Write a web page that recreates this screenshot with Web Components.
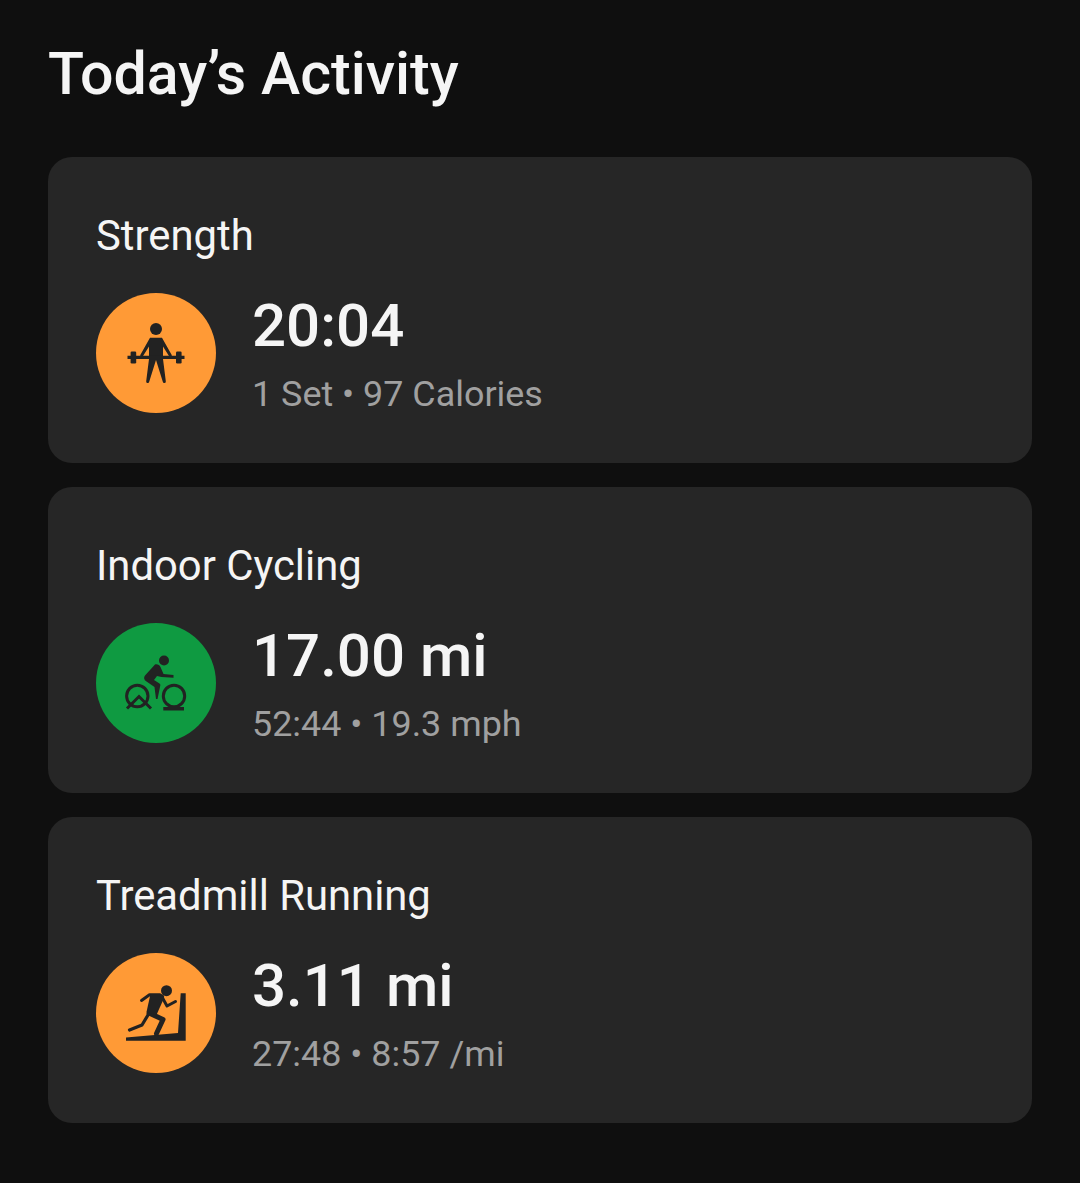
<!DOCTYPE html>
<html><head><meta charset="utf-8"><style>
html,body{margin:0;background:#0f0f0f}
body{font-family:Roboto,"Liberation Sans",sans-serif}
</style></head><body>
<activity-page>
<activity-card name="Strength" value="20:04" sub="1 Set • 97 Calories" color="#ff9a36" icon="strength"></activity-card>
<activity-card name="Indoor Cycling" value="17.00 mi" sub="52:44 • 19.3 mph" color="#0f9a41" icon="cycling"></activity-card>
<activity-card name="Treadmill Running" value="3.11 mi" sub="27:48 • 8:57 /mi" color="#ff9a36" icon="treadmill"></activity-card>
</activity-page>
<script>
const icons={
strength:`<circle cx="60" cy="36" r="6"/>
<path d="M54 44.7H66L76 62.5 73.6 64 67 53.5V66L69.8 88.2A1.4 1.4 0 0 1 66.8 88.8L60 67 53.2 88.8A1.4 1.4 0 0 1 50.2 88.2L53 66V53.5L46.4 64 44 62.5Z"/>
<path d="M31.5 62.7H88.5V65.9H31.5Z"/><rect x="34.6" y="58.5" width="5.6" height="12" rx="1.2"/><rect x="80" y="58.5" width="5.6" height="12" rx="1.2"/>`,
cycling:`<circle cx="68" cy="37.5" r="5"/>
<path d="M59 41.5C61.5 41 63.5 42 64.5 44L67.5 51 77.5 52V54.8L65.5 54 61 53 58 57 63.5 60.5C64.2 61 64.4 61.6 64.3 62.4L61.5 76H60L58.5 64 50.5 58.5C47.8 56.8 47.5 54.5 49 52.5Z"/>
<g fill="none" stroke="currentColor" stroke-width="3"><circle cx="41.3" cy="73" r="10.7"/><circle cx="78" cy="73" r="10.7"/><path d="M31 85.5 43 73.5 55 85.5"/></g>
<path d="M67.3 84H88V87.5H67.3Z"/>`,
treadmill:`<circle cx="70.5" cy="37.7" r="5.5"/>
<path d="M30 84.4 82 80 84.7 40.3H89.7V87.7H30Z"/>
<g fill="none" stroke="currentColor" stroke-linejoin="round" stroke-linecap="round">
<path stroke-width="3" d="M45.5 47.5 53.5 41.8H64"/>
<path stroke-width="3" d="M66 44 71 53 79.5 48.5"/>
<path stroke-width="3.2" d="M52 62 46 72 33.5 77"/>
<path stroke-width="5" d="M53 60 67 66.5 60.5 80.5"/>
</g>
<path d="M54.5 41H65C67.5 41.2 68.6 43 68 45L60.5 62 50.5 59Z"/>`};
const tpl=document.createElement('template');
tpl.innerHTML=`<style>
:host{display:block;box-sizing:border-box;height:306px;background:#262626;border-radius:24px;padding:55px 48px 0}
.name{font-size:41.8px;line-height:47px;color:#f5f5f5;height:47px}
.row{display:flex;align-items:flex-start;gap:36px;margin-top:34px}
.badge{width:120px;height:120px;border-radius:50%;flex:none;display:flex;color:#222}
svg{width:120px;height:120px;fill:currentColor}
.val{font-size:60px;font-weight:500;line-height:70px;color:#f5f5f5;white-space:nowrap}
.sub{font-size:35.9px;line-height:40px;color:#a0a0a0;margin-top:13px;white-space:nowrap}
.text{margin-top:-2px}
</style><div class="name"></div><div class="row"><div class="badge"><svg viewBox="0 0 120 120"></svg></div><div class="text"><div class="val"></div><div class="sub"></div></div></div>`;
class ActivityCard extends HTMLElement{
 connectedCallback(){
  const r=this.attachShadow({mode:'open'});r.appendChild(tpl.content.cloneNode(true));
  r.querySelector('.name').textContent=this.getAttribute('name');
  r.querySelector('.val').textContent=this.getAttribute('value');
  r.querySelector('.sub').textContent=this.getAttribute('sub');
  r.querySelector('.badge').style.background=this.getAttribute('color');
  r.querySelector('svg').innerHTML=icons[this.getAttribute('icon')];
 }
}
const ptpl=document.createElement('template');
ptpl.innerHTML=`<style>
:host{display:block;box-sizing:border-box;width:1080px;height:1183px;padding:38px 48px 0;background:#0f0f0f;overflow:hidden}
h1{margin:0;font-size:59.1px;font-weight:500;line-height:72px;color:#f5f5f5;white-space:nowrap}
.list{display:flex;flex-direction:column;gap:24px;margin-top:47px}
</style><h1>Today’s Activity</h1><div class="list"><slot></slot></div>`;
class ActivityPage extends HTMLElement{
 constructor(){super();this.attachShadow({mode:'open'}).appendChild(ptpl.content.cloneNode(true));}
}
customElements.define('activity-card',ActivityCard);
customElements.define('activity-page',ActivityPage);
</script>
</body></html>
